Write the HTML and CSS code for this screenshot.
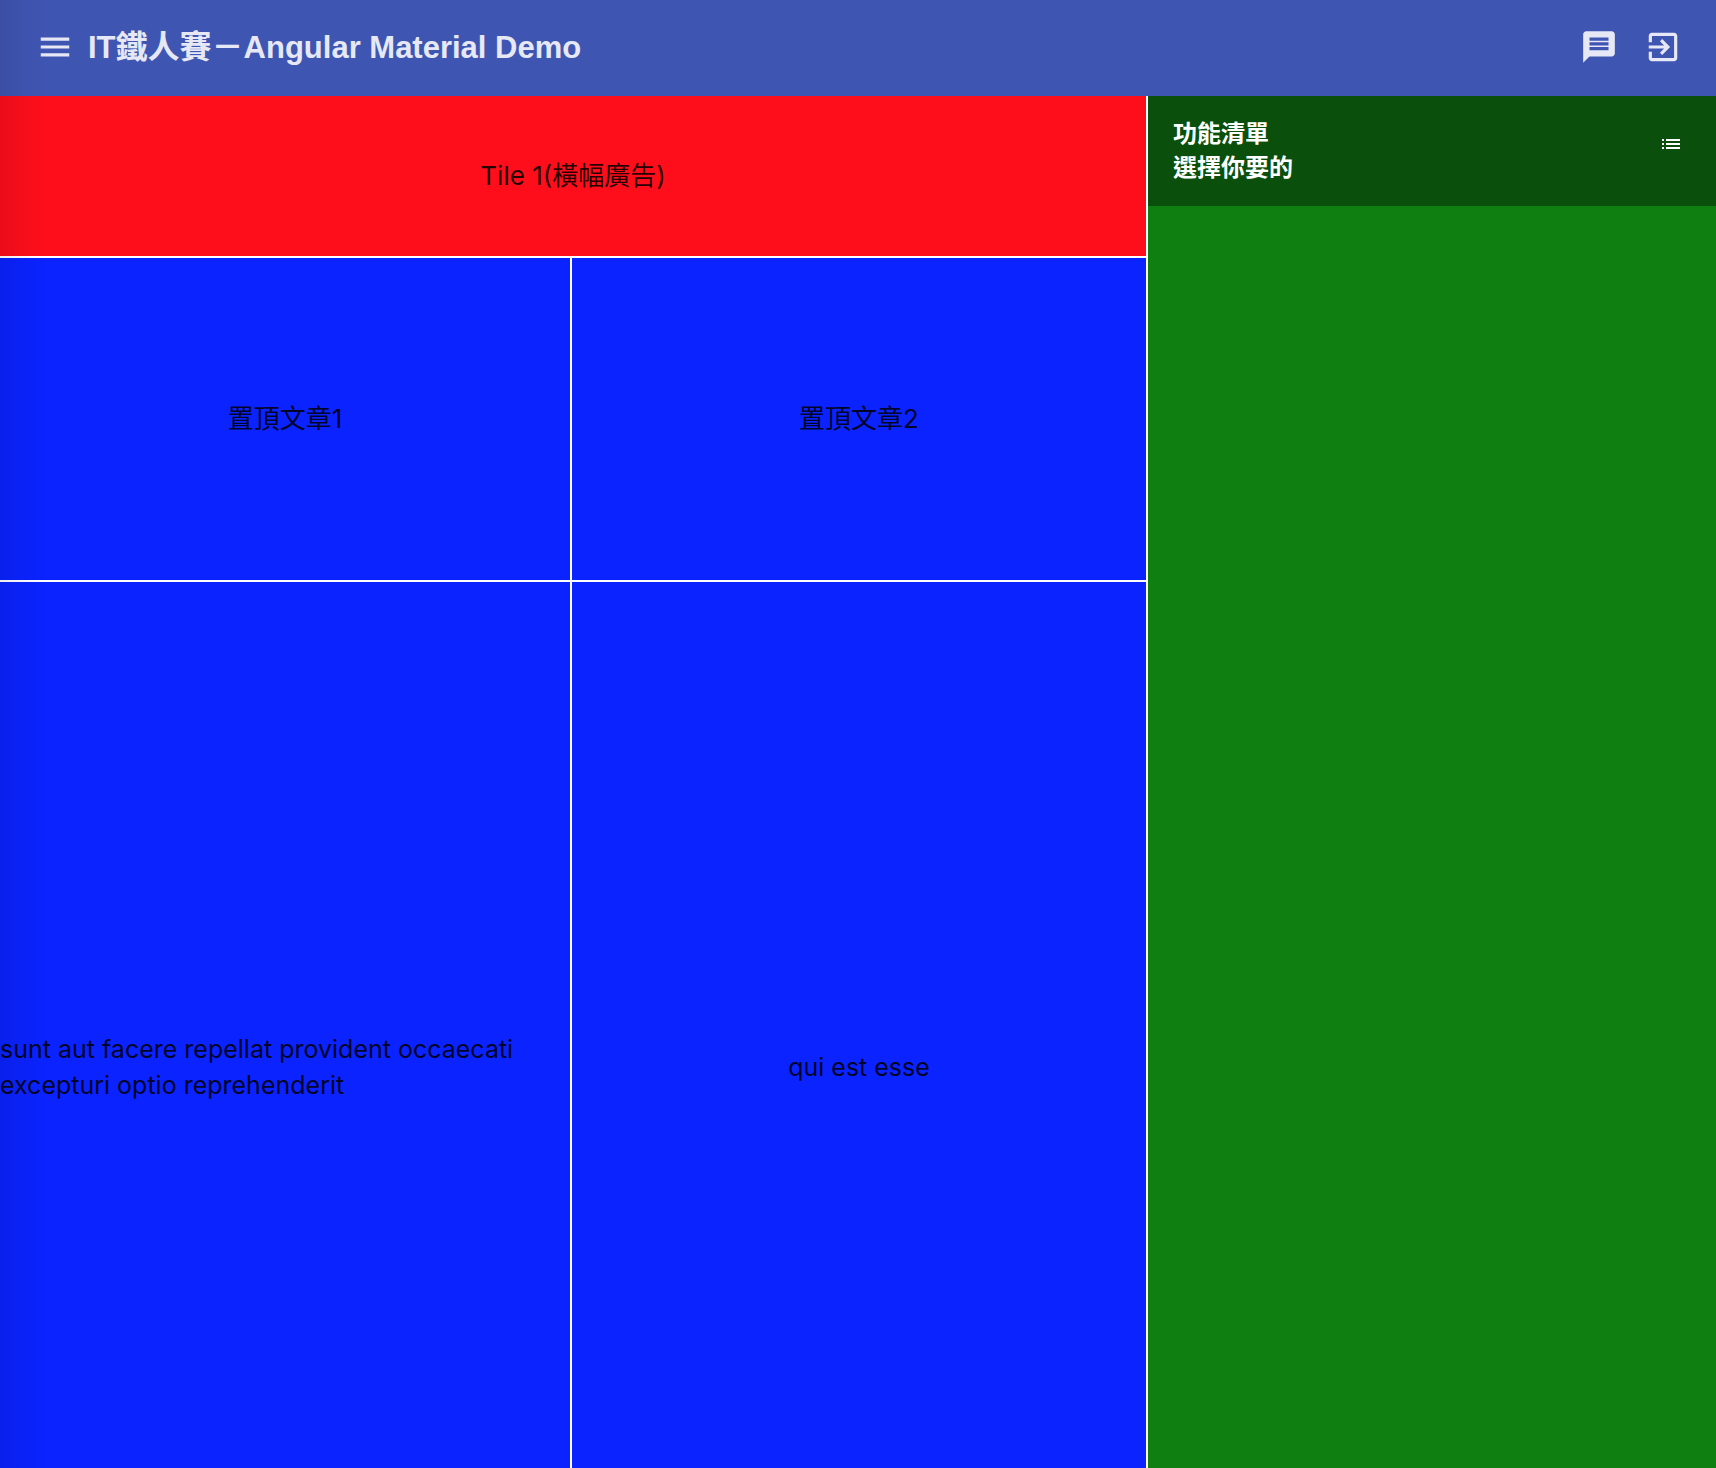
FILE: index.html
```html
<!DOCTYPE html>
<html lang="zh-Hant">
<head>
<meta charset="utf-8">
<meta name="viewport" content="width=device-width, initial-scale=1">
<title>IT鐵人賽－Angular Material Demo</title>
<link rel="stylesheet" href="styles.css">
</head>
<body>
<header class="toolbar">
  <button class="icon-button" type="button" aria-label="Menu">
    <svg class="icon" viewBox="0 0 24 24"><path d="M3 18h18v-2H3v2zm0-5h18v-2H3v2zm0-7v2h18V6H3z"/></svg>
  </button>
  <h1 class="title"><span class="latin">IT</span>鐵人賽－<span class="latin">Angular Material Demo</span></h1>
  <div class="actions">
    <button class="icon-button" type="button" aria-label="Messages">
      <svg class="icon" viewBox="0 0 24 24"><path d="M20 2H4c-1.100 0-1.990.9-1.990 2L2 22l4-4h14c1.100 0 2-.9 2-2V4c0-1.100-.9-2-2-2zm-2 12H6v-2h12v2zm0-3H6V9h12v2zm0-3H6V6h12v2z"/></svg>
    </button>
    <button class="icon-button" type="button" aria-label="Exit">
      <svg class="icon" viewBox="0 0 24 24"><path d="M10.090 15.590L11.500 17l5-5-5-5-1.410 1.410L12.670 11H3v2h9.670l-2.580 2.590zM19 3H5c-1.110 0-2 .9-2 2v4h2V5h14v14H5v-4H3v4c0 1.100.89 2 2 2h14c1.100 0 2-.9 2-2V5c0-1.100-.9-2-2-2z"/></svg>
    </button>
  </div>
</header>
<main class="grid">
  <section class="tile banner">Tile 1(橫幅廣告)</section>
  <section class="tile">置頂文章1</section>
  <section class="tile">置頂文章2</section>
  <article class="tile post">sunt aut facere repellat provident occaecati excepturi optio reprehenderit</article>
  <article class="tile post">qui est esse</article>
  <aside class="side">
    <header class="side-header">
      <h2 class="side-title">功能清單<br>選擇你要的</h2>
      <button class="icon-button" type="button" aria-label="List">
        <svg class="list-icon" viewBox="0 0 20 10"><path d="M1 0h2v2H1zM5 0h14v2H5zM1 4h2v2H1zM5 4h14v2H5zM1 8h2v2H1zM5 8h14v2H5z"/></svg>
      </button>
    </header>
  </aside>
</main>
<div class="edge-shadow"></div>
</body>
</html>
```
FILE: styles.css
```css
* {
  box-sizing: border-box;
}

body {
  display: flex;
  flex-direction: column;
  height: 100vh;
  margin: 0;
  background: #fff;
  color: rgba(0, 0, 0, 0.87);
  font-family: Inter, "Noto Sans CJK TC", sans-serif;
  font-size: 26px;
  line-height: 36px;
}

.toolbar {
  display: flex;
  flex: none;
  align-items: center;
  height: 96px;
  padding: 0 34px 2px 36px;
  background: #3f55b2;
  color: #e6e8f5;
}

.title {
  margin: 0 0 0 14px;
  font-family: "Liberation Sans", "Noto Sans CJK TC", sans-serif;
  font-size: 32px;
  font-weight: 700;
  line-height: 40px;
  white-space: nowrap;
}

.latin {
  font-size: 31px;
}

.actions {
  display: flex;
  gap: 26px;
  margin-left: auto;
}

.icon-button {
  display: flex;
  padding: 0;
  border: 0;
  background: none;
  color: inherit;
  cursor: pointer;
}

.icon {
  width: 38px;
  height: 38px;
  fill: currentColor;
}

/* The grid scrolls on its own under the fixed-height toolbar. */
.grid {
  flex: 1;
  min-height: 0;
  display: grid;
  grid-template-columns: 570fr 574fr 568fr;
  grid-template-rows: 160px 322px 970px;
  gap: 2px;
  overflow-y: auto;
  scrollbar-width: none;
}

.tile {
  display: flex;
  align-items: center;
  justify-content: center;
  min-width: 0;
  background: #0a23ff;
}

.banner {
  grid-column: 1 / 3;
  background: #fe0e1b;
}

.post {
  font-size: 25px;
}

.side {
  grid-column: 3;
  grid-row: 1 / 4;
  background: #0f7f12;
}

.side-header {
  display: flex;
  align-items: center;
  justify-content: space-between;
  height: 110px;
  padding: 0 35px 14px 25px;
  background: #0a4f0b;
  color: #fff;
}

.side-title {
  margin: 0;
  padding-top: 14px;
  font-size: 24px;
  font-weight: 700;
  line-height: 34px;
}

.list-icon {
  width: 20px;
  height: 10px;
  fill: currentColor;
}

.edge-shadow {
  position: absolute;
  inset: 0 auto 0 0;
  width: 48px;
  background: linear-gradient(to right, rgba(0, 0, 0, 0.08), rgba(0, 0, 0, 0.03) 50%, transparent);
  pointer-events: none;
}
```
